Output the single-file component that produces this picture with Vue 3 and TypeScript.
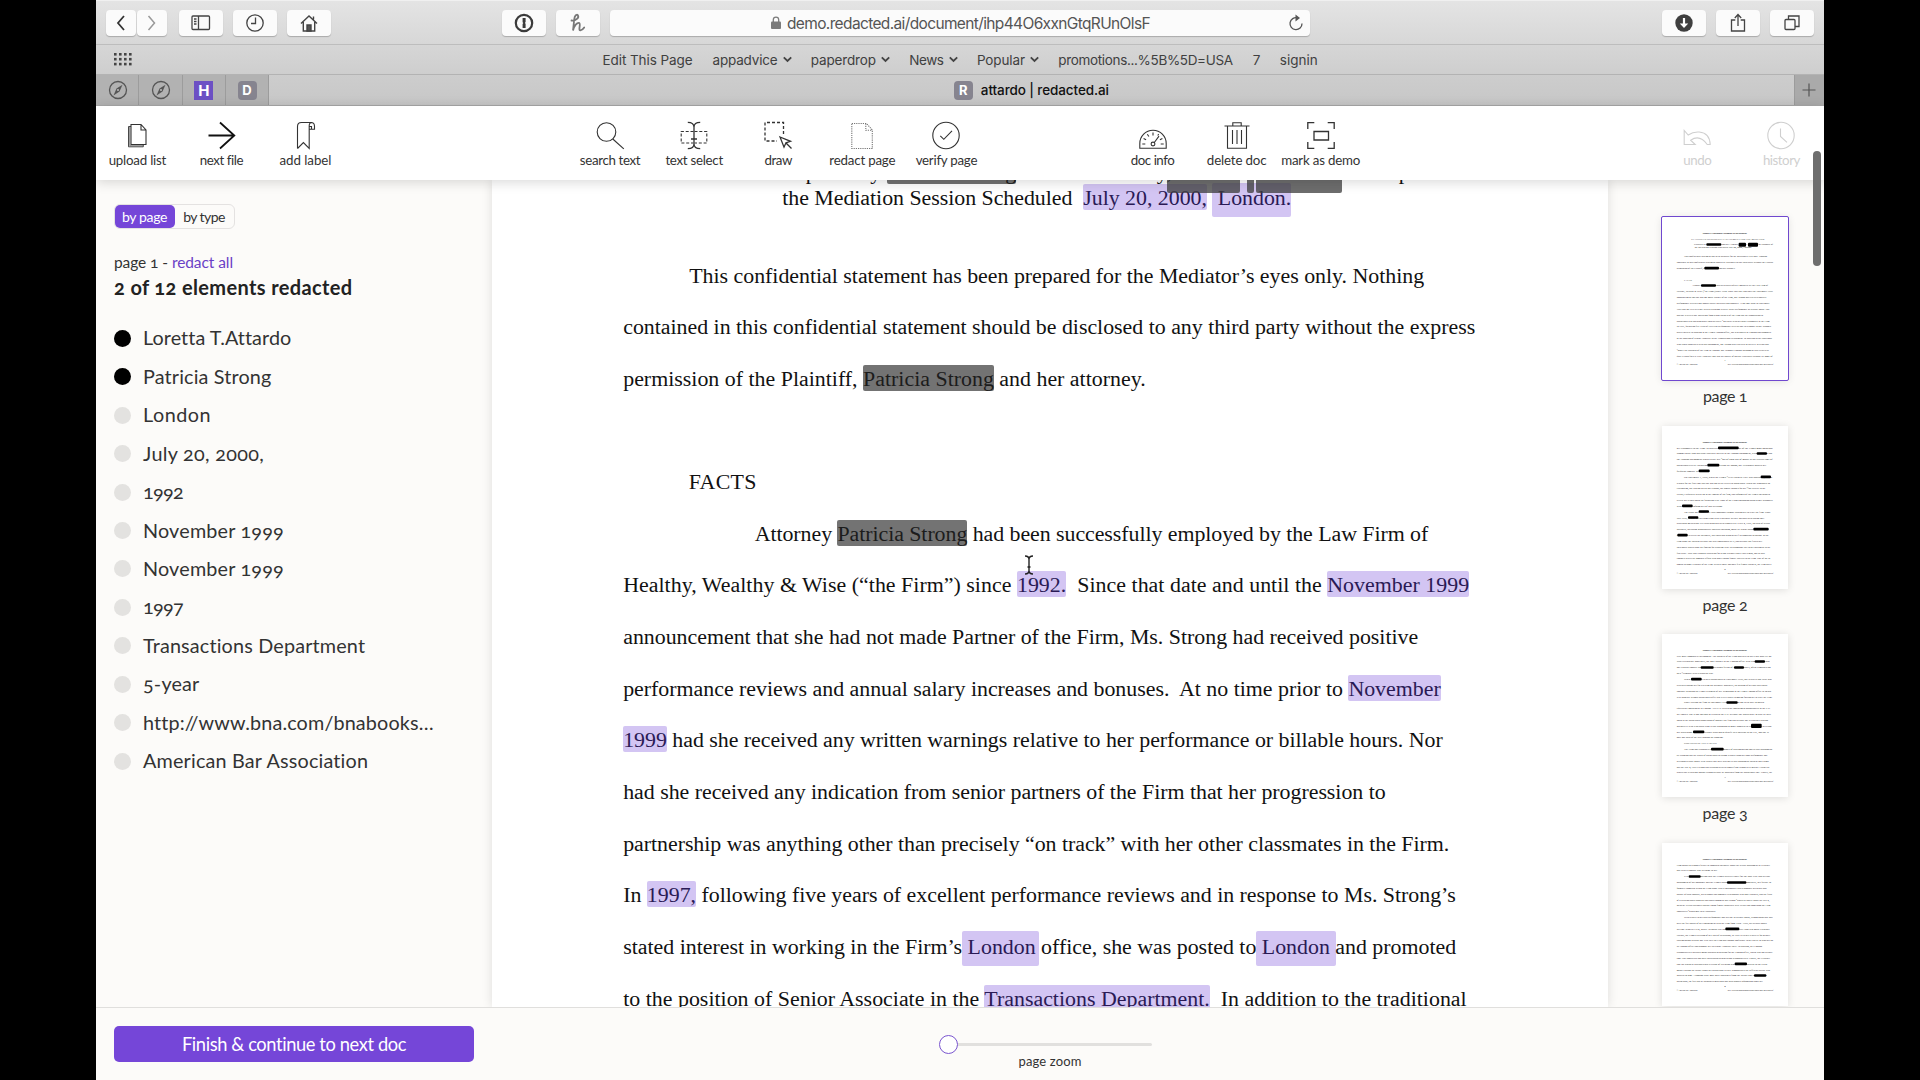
<script setup lang="ts">
import type { Directive } from 'vue'

/* Spreads letter spacing so that a text run takes the given width. */
const vFit: Directive<HTMLElement, number> = {
  mounted(el, binding) {
    const natural = el.getBoundingClientRect().width
    const count = (el.textContent ?? '').length
    if (natural > 0 && count > 0) {
      el.style.letterSpacing = `${(binding.value - natural) / count}px`
    }
  },
}

interface Bookmark { label: string; width: number; menu?: boolean }
const bookmarks: Bookmark[] = [
  { label: 'Edit This Page', width: 90 },
  { label: 'appadvice', width: 65, menu: true },
  { label: 'paperdrop', width: 65, menu: true },
  { label: 'News', width: 34.5, menu: true },
  { label: 'Popular', width: 48, menu: true },
  { label: 'promotions...%5B%5D=USA', width: 174.5 },
  { label: '7', width: 7 },
  { label: 'signin', width: 38 },
]

interface Tool { label: string; width: number; icon: string; off?: boolean }
const groups: { cls: string; tools: Tool[] }[] = [
  {
    cls: 'g1',
    tools: [
      { label: 'upload list', width: 57.5, icon: '<path d="M9 3.500h10l5 5.500v14.500H9zM19 3.500v5.500h5"/><path stroke-width=".9" d="M9 5.500H6.500v20.300h14.800v-2.300"/><path stroke-width=".6" d="M7.700 6v18.700h13.300"/>' },
      { label: 'next file', width: 43, icon: '<path stroke-width="1.800" stroke="#111" d="M2.500 14.500h25.500M14 1.500l14.300 13L14 27.500"/>' },
      { label: 'add label', width: 52, icon: '<path d="M7.500 27.500V5.500q0-4 4-4H21q3.500 0 3.500 3.800v2.900h-5.300M19.200 8.200V27.500l-5.800-6-5.900 6M19.200 8.200V4.800q0-3.300 2.600-3.300M19.200 5.500h2.300v2.500"/>' },
    ],
  },
  {
    cls: 'g2',
    tools: [
      { label: 'search text', width: 60.5, icon: '<circle cx="11.500" cy="11" r="9.300"/><path d="M17.800 18l11 9.800"/>' },
      { label: 'text select', width: 57.5, icon: '<path stroke-dasharray="3 1.800" d="M14.500 10.500H2.200v11.500h12.300M15.500 10.500h12.300v11.500H15.500"/><path stroke-width="1.300" d="M8.800 1.300q6.200 0 6.200 5v16.400q0 5-6.200 5M21.200 1.300q-6.200 0-6.200 5v16.400q0 5 6.200 5M12 18h6"/>' },
      { label: 'draw', width: 27.5, icon: '<path stroke-width="1.300" stroke-dasharray="3 2" d="M20.500 13V1.500H2v18.500h12"/><path stroke-width="1.300" d="M17 16l10.500 4.300-4.500 1.500-2 4.400zM22.500 21.500l6 6"/>' },
      { label: 'redact page', width: 66, icon: '<path stroke="#777" stroke-dasharray="1.200 1" d="M4.800 2.500h14.700l5.800 6.500v18.500H4.800zM18.800 2.500v6.800h6.500"/>' },
      { label: 'verify page', width: 61.5, icon: '<circle cx="15" cy="14.500" r="13.200"/><path d="M9.300 14.800l3.500 3.500 8.200-8.500"/>' },
    ],
  },
  {
    cls: 'g3',
    tools: [
      { label: 'doc info', width: 43.5, icon: '<path d="M1.800 27.300v-4.800a13.200 13.200 0 0 1 26.400 0v4.800z"/><circle cx="15" cy="23" r="1.900"/><path d="M16.300 21.500l4.700-6.300M4.300 23h3M22.700 23h3M5.600 17.500l2.500 1.300M9.300 13.200l1.600 2.300M15 11.500v3M24.400 17.500l-2.500 1.300M20.700 13.200l-1 1.300"/>' },
      { label: 'delete doc', width: 59.5, icon: '<path d="M2.500 5h25M10.800 5V1.700h8.400V5M5.500 5v22.300h19V5M10.500 9v14M15 9v14M19.500 9v14"/>' },
      { label: 'mark as demo', width: 79, icon: '<path stroke-width="1.300" d="M1.800 8V1.700h6.500M21.700 1.700h6.500V8M28.200 21v6.300h-6.500M8.300 27.300H1.800V21M8 10.500h14.500v8.500H8z"/>' },
    ],
  },
  {
    cls: 'g4',
    tools: [
      { label: 'undo', width: 28, off: true, icon: '<path d="M2.200 9.500v14h11l-4.500-4.300q9-6.300 16.500 4.300h3q-.5-11.500-11-12.500-6-.5-11 3z"/>' },
      { label: 'history', width: 37, off: true, icon: '<circle cx="15" cy="14.500" r="13.200"/><path d="M14.500 7.500v8l6.500 5.800"/>' },
    ],
  },
]

interface Entity { name: string; width: number; redacted?: boolean }
const entities: Entity[] = [
  { name: 'Loretta T.Attardo', width: 147, redacted: true },
  { name: 'Patricia Strong', width: 128.5, redacted: true },
  { name: 'London', width: 68 },
  { name: 'July 20, 2000,', width: 121 },
  { name: '1992', width: 40 },
  { name: 'November 1999', width: 141 },
  { name: 'November 1999', width: 141 },
  { name: '1997', width: 40 },
  { name: 'Transactions Department', width: 222.5 },
  { name: '5-year', width: 56.5 },
  { name: 'http://www.bna.com/bnabooks…', width: 290 },
  { name: 'American Bar Association', width: 225.5 },
]

type Mark = 'hl' | 'tall' | 'tall wide' | 'dark'
interface Run { t: string; m?: Mark }
interface Line { runs: Run[]; indent: number; width: number; cls?: string }
const r = (t: string, m?: Mark): Run => ({ t, m })
const lines: Line[] = [
  { cls: 'single', indent: 153.5, width: 694, runs: [r('Prepared by '), r('Patricia Strong', 'dark'), r(' and her Attorney, Loretta T. Attardo for Purposes of')] },
  { cls: 'single last', indent: 159, width: 509, runs: [r('the Mediation Session Scheduled\u00a0 '), r('July 20, 2000,', 'hl'), r('\u00a0 '), r('London.', 'tall')] },
  { indent: 66, width: 735, runs: [r('This confidential statement has been prepared for the Mediator’s eyes only. Nothing')] },
  { indent: 0, width: 852, runs: [r('contained in this confidential statement should be disclosed to any third party without the express')] },
  { indent: 0, width: 522.5, runs: [r('permission of the Plaintiff, '), r('Patricia Strong', 'dark'), r(' and her attorney.')] },
  { indent: 0, width: 0, runs: [] },
  { indent: 65.5, width: 68, runs: [r('FACTS')] },
  { indent: 131.5, width: 673.5, runs: [r('Attorney '), r('Patricia Strong', 'dark'), r(' had been successfully employed by the Law Firm of')] },
  { indent: 0, width: 846, runs: [r('Healthy, Wealthy & Wise (“the Firm”) since '), r('1992.', 'hl'), r('\u00a0 Since that date and until the '), r('November 1999', 'hl')] },
  { indent: 0, width: 795, runs: [r('announcement that she had not made Partner of the Firm, Ms. Strong had received positive')] },
  { indent: 0, width: 817.5, runs: [r('performance reviews and annual salary increases and bonuses.\u00a0 At no time prior to '), r('November', 'hl')] },
  { indent: 0, width: 819.5, runs: [r('1999', 'hl'), r(' had she received any written warnings relative to her performance or billable hours. Nor')] },
  { indent: 0, width: 762.5, runs: [r('had she received any indication from senior partners of the Firm that her progression to')] },
  { indent: 0, width: 826, runs: [r('partnership was anything other than precisely “on track” with her other classmates in the Firm.')] },
  { indent: 0, width: 832.5, runs: [r('In '), r('1997,', 'hl'), r(' following five years of excellent performance reviews and in response to Ms. Strong’s')] },
  { indent: 0, width: 833, runs: [r('stated interest in working in the Firm’s '), r('London', 'tall'), r(' office, she was posted to '), r('London', 'tall wide'), r(' and promoted')] },
  { indent: 0, width: 843.5, runs: [r('to the position of Senior Associate in the '), r('Transactions Department.', 'hl'), r('\u00a0 In addition to the traditional')] },
]

/* Thumbnails are drawn on a 378 × 488 grid: rows [x, width, text, y], bars [x, y, width, height]. */
interface Thumb { top: number; rows: [number, number, string, number][]; bars: [number, number, number, number?][] }
const thumbs: Thumb[] = [
  {
    top: 47,
    rows: [
      [88, 219, 'PLAINTIFF’S CONFIDENTIAL STATEMENT FOR THE MEDIATOR', 65],
      [96, 237, 'Prepared by Patricia Strong and her Attorney, Loretta T. Attardo for Purposes of', 82],
      [98, 172, 'the Mediation Session Scheduled July 20, 2000, London.', 91],
      [66, 249, 'This confidential statement has been prepared for the Mediator’s eyes only. Nothing', 118],
      [44, 289, 'contained in this confidential statement should be disclosed to any third party without the express', 135],
      [44, 176, 'permission of the Plaintiff, Patricia Strong and her attorney.', 153],
      [66, 24, 'FACTS', 188],
      [90, 228, 'Attorney Patricia Strong had been successfully employed by the Law Firm of', 205],
      [44, 288, 'Healthy, Wealthy & Wise (“the Firm”) since 1992. Since that date and until the November 1999', 223],
      [44, 270, 'announcement that she had not made Partner of the Firm, Ms. Strong had received positive', 240],
      [44, 278, 'performance reviews and annual salary increases and bonuses. At no time prior to November', 258],
      [44, 278, '1999 had she received any written warnings relative to her performance or billable hours. Nor', 275],
      [44, 259, 'had she received any indication from senior partners of the Firm that her progression to', 293],
      [44, 280, 'partnership was anything other than precisely “on track” with her other classmates in the Firm.', 311],
      [44, 283, 'In 1997, following five years of excellent performance reviews and in response to Ms. Strong’s', 328],
      [44, 283, 'stated interest in working in the Firm’s London office, she was posted to London and promoted', 346],
      [44, 286, 'to the position of Senior Associate in the Transactions Department. In addition to the traditional', 363],
      [44, 276, 'legal work associated with this assignment, Ms. Strong was expected to actively develop and', 381],
      [44, 276, '“grow” the business of the Firm in London. Ms. Strong’s London assignment was viewed as', 398],
      [44, 288, 'quite a coup for a 5-year Associate and was the source of openly expressed jealousy by some of', 416],
    ],
    bars: [[133, 82, 45], [230, 83, 22, 12], [258, 83, 30, 12], [127, 153, 44], [117, 205, 45]],
  },
  {
    top: 48,
    rows: [
      [44, 288, 'her classmates in the Firm. In particular, Patricia Strong one of the Firm’s most notorious', 65],
      [44, 287, 'Summit nurse who had also expressed interest in the London assignment, resented Strong that', 82],
      [44, 288, 'the London assignment would place her “out of sight out of mind” at the critical time of', 100],
      [44, 268, 'partnership review. Following Strong’s rejection to London, Mr. Heathcock assured her', 117],
      [44, 98, 'frequent contact with Strong', 135],
      [66, 264, 'On November 1, 1999, when the Firm’s “New Partners List” was published, Strong', 152],
      [44, 280, 'learned for the first time that she had not been elected to partnership. When she demanded an', 170],
      [44, 266, 'explanation, she was not given any reasons, but simply thanked for her “fine service to the', 187],
      [44, 280, 'clients,” requested to stay on in the employ of the firm, and informed of the Firm’s intention to', 205],
      [44, 289, 'review her record again the following year. None of the Firm’s managing partners met personally', 222],
      [44, 138, 'with Strong to inform her of this decision.', 240],
      [66, 260, 'The result on Strong’s life was emotional turmoil causing her to leave the firm. Since', 257],
      [44, 264, 'July 1999, Strong had been meeting with a therapist weekly and had been taking anti-', 275],
      [44, 280, 'depressant medication. Her depression had been triggered by a July 4, 1999, incident of sexual', 292],
      [44, 276, 'advances, including inappropriate physical touching, made by senior partner, Wise Strong', 310],
      [44, 276, 'Strong had rejected the advances, but could not bring herself to complain to anyone in the', 327],
      [44, 256, 'Firm about the incident because she was embarrassed by it, and because she feared her', 345],
      [44, 281, 'colleagues would think her foolish for allowing Wise to accompany her to her apartment in the', 362],
      [44, 264, 'first place. Wise had a known reputation for being a drinker and a lady’s man, and he had', 380],
      [44, 281, 'engaged in several romantic affairs with other young female lawyers in the Firm. One of the as', 397],
      [44, 284, 'known as name a partner of the Firm. With all male and only few female partners, the Firm has a', 415],
    ],
    bars: [[168, 65, 62], [284, 82, 31], [136, 117, 36], [110, 134, 33], [296, 152, 31], [60, 239, 32], [110, 256, 31], [78, 274, 31], [274, 309, 46], [46, 327, 31]],
  },
  {
    top: 48,
    rows: [
      [44, 284, 'very male-dominated environment. The partners of the Firm appeared to put a low hard eye on', 65],
      [44, 279, 'Wise’s behavior. Moreover, the only partner in the London office with whom Strong had', 82],
      [44, 282, 'any regular contact was Patricia, Firebrand friend of Strong Bradley, often remarked on', 100],
      [44, 110, 'their “criminal” Wise’s behavior was.', 117],
      [66, 263, 'When Strong was denied partnership in November 1999, she realized that Wise had', 135],
      [44, 272, 'retaliated against her for rejecting his advances. Moreover, the opinion of her had said would', 152],
      [44, 283, 'continue to poison the Firm’s treatment of her. Remaining in the Firm’s London office as an 8th', 170],
      [44, 287, 'year associate without partnership suffer was a very public demotion forcing her to leave the Firm.', 188],
      [66, 240, 'Since leaving the firm in November 1999, Strong has not been able to obtain', 205],
      [44, 282, 'equivalent employment in London. As a U.S. citizen the employment opportunities in the U.K.', 223],
      [44, 283, 'are limited. She is not anxious to return to the U.S. because she would have to start all over', 240],
      [44, 274, 'again in the partnership progression of another law firm and because she is currently starting', 258],
      [44, 284, 'intensively with a therapist who is just beginning to make progress in terms Strong to return', 275],
      [44, 276, 'her depression. Strong is certainly studying to qualify as a solicitor in the UK, and she is', 293],
      [44, 140, 'only one third of the way through the program.', 310],
      [66, 98, 'POSITIONS OF THE PARTIES', 328],
      [66, 265, 'The Firm has responded to Strong’s charges of discrimination and sexual harassment', 345],
      [44, 272, 'by claiming that the denial of partnership to Strong is based upon her poor performance and', 363],
      [44, 276, 'declining billable hours. Wise denies that there was any sexual harassment incident and claims', 380],
      [44, 279, 'that the July 4, 1999 evening and reaching between himself and Strong were mutual. Further he', 398],
      [44, 286, 'denies any retaliation against Strong because he abstained from the partnership vote. Finally, the', 415],
    ],
    bars: [[278, 82, 31], [116, 100, 39], [216, 100, 30], [87, 135, 32], [193, 205, 34], [267, 275, 32, 13], [93, 293, 34], [147, 345, 38]],
  },
  {
    top: 48,
    rows: [
      [44, 280, 'Firm points to Strong’s failure to complain internally about the sexual harassment as evidence', 65],
      [44, 122, 'that Wise’s conduct was welcome to her.', 82],
      [66, 258, 'It is Strong’s position that the Firm’s articles liable for the past year was sexual', 100],
      [44, 283, 'harassment of her manager and the Firm’s partner Patricia Strong Moreover, her failure to', 117],
      [44, 270, 'formally complain within the Firm about Wise’s misconduct was reasonable given his past', 135],
      [44, 286, 'history of such conduct, his personal and romantic relationship with other partners, and the fears', 152],
      [44, 278, 'of retaliation based upon his unleashed comment that Strong “would be sorry” about the July 4,', 170],
      [44, 281, 'incident. Sexual advances toward young female associates were clearly not something the Firm', 187],
      [44, 118, 'considered “problems” to be addressed.', 205],
      [66, 266, 'With respect to her past performance and decline in billable hours, Strong points out that', 222],
      [44, 270, 'over the full course of her employment with the Firm from 1992 - 1999, her billable hours', 240],
      [44, 280, 'average 2100 per year, nearly 10 hours less than Strong’s hourly who was made a partner.', 257],
      [44, 280, 'Further, the Firm’s criticism of her lack of dedication, in 1999 is clearly a pretext for gender', 275],
      [44, 289, 'discrimination because one year later the Firm had enough confidence in her ability to send her on', 292],
      [44, 256, 'its London office and promote her to Senior Associate there. In addition, her London', 310],
      [44, 288, 'responsibilities included major business generation for the London office, which was not billable', 327],
      [44, 280, 'time. She should did not have such business generation responsibilities. Finally, the evidence', 345],
      [44, 272, 'that the partners discussed out relevant of retention when Strong’s success in the client', 362],
      [44, 280, 'market during the debate about her partnership clearly demonstrates the different culture was', 380],
      [44, 270, 'applied to him. Although Wise may have abstained from the actual vote about Strong', 397],
      [44, 258, 'partnership, the fact that he introduced malicious and third-handed information about her', 415],
    ],
    bars: [[80, 100, 36], [195, 118, 58], [190, 257, 42], [218, 362, 37], [276, 397, 37]],
  },
]
</script>

<template>
  <div class="stage">
    <div class="window">
      <div class="toolbar">
        <div class="btn nav"><svg width="12" height="18" viewBox="0 0 12 18"><path d="M9 2L3 9l6 7" stroke="#333" stroke-width="1.800" /></svg></div>
        <div class="btn nav fwd"><svg width="12" height="18" viewBox="0 0 12 18"><path d="M2.500 2L8.500 9l-6 7" stroke="#999" stroke-width="1.500" /></svg></div>
        <div class="btn side"><svg width="20" height="16" viewBox="0 0 20 16" stroke="#444" stroke-width="1.300"><rect x="1" y="1" width="17.500" height="13.500" rx="1" /><path d="M7.500 1v13.500M3 4h2.500M3 6.500h2.500M3 9h2.500" /></svg></div>
        <div class="btn"><svg width="20" height="20" viewBox="0 0 20 20" stroke="#444" stroke-width="1.300"><circle cx="10" cy="10" r="8.200" /><path d="M10.500 4.500v6H6" /></svg></div>
        <div class="btn"><svg width="20" height="20" viewBox="0 0 20 20" stroke="#444" stroke-width="1.400"><path d="M2 10.500L10 3l8 7.500M4.300 9v9h11.400V9M14.500 6.500V3.500" /><path d="M8 18v-6h4v6z" fill="#555" /></svg></div>
        <div class="btn pass"><svg width="20" height="20" viewBox="0 0 20 20"><circle cx="10" cy="10" r="8.200" stroke="#3b3b3b" stroke-width="2.200" /><path d="M8.600 5h3v4l-.7.900.7.900v4.200H8.600v-4l.7-.9-.7-.9z" fill="#3b3b3b" /></svg></div>
        <div class="btn"><svg width="18" height="20" viewBox="0 0 18 20" stroke="#777" stroke-width="1.800" stroke-linecap="round"><path d="M2.500 7.500C7 8 10.500 4.500 8.800 2.200 7.500.800 5.600 3 5.300 6L4 17.500C5.200 12.500 8 9.500 10 9.800c2.300.4-1 7.200 1.200 7.500 1.600.2 3-1.300 4-2.800" /></svg></div>
        <div class="address">
          <svg class="lock" width="10" height="13" viewBox="0 0 10 13"><path d="M2.300 6V3.800a2.700 2.700 0 0 1 5.400 0V6" stroke="#7b7b7b" stroke-width="1.300" /><rect y="5.500" width="10" height="7.500" rx="1" fill="#7b7b7b" /></svg>
          <span v-fit="363" class="url">demo.redacted.ai/document/ihp44O6xxnGtqRUnOlsF</span>
          <svg class="reload" width="16" height="18" viewBox="0 0 16 18"><path d="M9.500 3.800A6 6 0 1 0 14 9.500" stroke="#555" stroke-width="1.300" /><path d="M7.500.5l4.500 3.500-4.500 3.500z" fill="#555" /></svg>
        </div>
        <div class="btn dl"><svg width="18" height="20" viewBox="0 0 18 20"><circle cx="9" cy="10" r="8.700" fill="#3f3f3f" /><path d="M9 5v7" stroke="#fff" stroke-width="2.200" /><path d="M4.800 10.500h8.400L9 15z" fill="#fff" /></svg></div>
        <div class="btn"><svg width="18" height="20" viewBox="0 0 18 20" stroke="#444" stroke-width="1.300"><path d="M6.300 7H2.500v11h13V7h-3.800M9 13V2M5.800 5L9 1.500 12.200 5" /></svg></div>
        <div class="btn"><svg width="18" height="20" viewBox="0 0 18 20" stroke="#444" stroke-width="1.300"><rect x="2" y="6.500" width="10" height="10" rx="1" /><path d="M5.500 6.500V3h10.500v10.500h-4" /></svg></div>
      </div>

      <div class="bookmarks">
        <svg class="grid" width="18" height="13" viewBox="0 0 18 13"><template v-for="y in 3" :key="y"><rect v-for="x in 4" :key="x" :x="(x - 1) * 5" :y="(y - 1) * 4.900" width="2.600" height="2.600" /></template></svg>
        <div class="marks">
          <span v-for="b in bookmarks" :key="b.label" class="mark" :class="{ menu: b.menu }">
            <span v-fit="b.width">{{ b.label }}</span>
            <svg v-if="b.menu" width="9" height="7" viewBox="0 0 9 7"><path d="M.8 1.300l3.700 3.700 3.700-3.700" stroke="#444" stroke-width="1.800" /></svg>
          </span>
        </div>
      </div>

      <div class="tabs">
        <div v-for="n in 2" :key="n" class="tab"><svg class="compass" width="20" height="20" viewBox="0 0 20 20"><circle cx="10" cy="10" r="8.500" stroke="#555" stroke-width="1.300" /><path d="M14.500 4.800l-3 6.700-6 4 3-7z" fill="#555" /><circle cx="10" cy="10" r="1" fill="#bbb" /></svg></div>
        <div class="tab"><i class="fav purple">H</i></div>
        <div class="tab"><i class="fav">D</i></div>
        <div class="tab active"><i class="fav">R</i><span v-fit="128">attardo | redacted.ai</span></div>
        <div class="tab plus"><svg width="14" height="14" viewBox="0 0 14 14"><path d="M7 .5v13M.5 7h13" stroke="#555" stroke-width="1.200" /></svg></div>
      </div>

      <header class="tools">
        <div v-for="g in groups" :key="g.cls" class="group" :class="g.cls">
          <div v-for="t in g.tools" :key="t.label" class="tool" :class="{ off: t.off }">
            <svg width="30" height="30" viewBox="0 0 30 30" stroke="currentColor" stroke-width="1.100" v-html="t.icon" />
            <span v-fit="t.width">{{ t.label }}</span>
          </div>
        </div>
      </header>

      <main class="work">
        <aside class="sidebar">
          <div class="toggle"><span class="on"><b v-fit="45">by page</b></span><span><b v-fit="41.5">by type</b></span></div>
          <p class="where"><span v-fit="119">page 1 - <a>redact all</a></span></p>
          <h2><span v-fit="238.500">2 of 12 elements redacted</span></h2>
          <ul>
            <li v-for="(e, i) in entities" :key="i"><i :class="{ done: e.redacted }" /><span v-fit="e.width">{{ e.name }}</span></li>
          </ul>
        </aside>

        <section class="page">
          <div v-for="(l, i) in lines" :key="i" class="line" :class="l.cls" :style="{ paddingLeft: l.indent + 'px' }">
            <span v-fit="l.width" class="text"><span v-for="(s, j) in l.runs" :key="j" :class="s.m">{{ s.t }}</span></span>
          </div>
          <i class="veil v1" /><i class="veil v2" /><i class="veil v3" />
          <svg class="caret" width="10" height="20" viewBox="0 0 10 20" stroke="#222" stroke-width="1.400"><path d="M1 1q4 0 4 3.500v11Q5 19 1 19M9 1Q5 1 5 4.500v11Q5 19 9 19M3.500 12h3" /></svg>
        </section>

        <nav class="thumbs">
          <figure v-for="(t, i) in thumbs" :key="i" :class="{ current: i === 0 }">
            <svg width="126" height="163" viewBox="0 0 378 488" class="sheet">
              <text x="122" :y="t.top + 3" textLength="133" lengthAdjust="spacingAndGlyphs" class="bold">Plaintiff’s Confidential Statement for the Mediator</text>
              <text v-for="row in t.rows" :key="row[3]" :x="row[0]" :y="row[3] + 3" :textLength="row[1]" lengthAdjust="spacingAndGlyphs">{{ row[2] }}</text>
              <rect v-for="(b, k) in t.bars" :key="k" :x="b[0]" :y="b[1] - (b[3] ?? 8) / 2" :width="b[2]" :height="b[3] ?? 8" rx="3" fill="#000" />
              <text x="187" y="431">{{ i + 1 }}</text>
              <text x="44" y="444" textLength="62" lengthAdjust="spacingAndGlyphs" class="foot">© American Bar Association</text>
              <text x="197" y="444" textLength="137" lengthAdjust="spacingAndGlyphs" class="foot">http://www.bna.com/bnabooks/ababna/annual/2001/mediation.pdf</text>
            </svg>
            <figcaption><span v-fit="i ? 45 : 44">page {{ i + 1 }}</span></figcaption>
          </figure>
        </nav>
      </main>

      <footer class="bottom">
        <button><span v-fit="224.500">Finish &amp; continue to next doc</span></button>
        <div class="zoom">
          <div class="track"><i /></div>
          <span v-fit="63">page zoom</span>
        </div>
      </footer>
      <i class="scrollbar" />
    </div>
  </div>
</template>

<style>
html, body { margin: 0; background: #000; overflow: hidden; }
</style>

<style scoped>
* { box-sizing: border-box; }
svg { fill: none; display: block; flex: none; }
svg.grid { fill: #444; }
i { font-style: normal; }
.stage { width: 1920px; height: 1080px; background: #000; overflow: hidden; }
.window { position: relative; width: 1728px; height: 1080px; margin-left: 96px; display: flex; flex-direction: column; background: #fcfbf9; font-family: Lato, "Liberation Sans", sans-serif; color: #333; overflow: hidden; }
.window > * { flex: none; }
span { white-space: pre; }

.toolbar { height: 45px; padding: 9px 10px 0; display: flex; background: linear-gradient(#e4e4e4, #d7d7d7); border-top: 1px solid #f0f0f0; border-bottom: 1px solid #bdbdbd; }
.btn { width: 44px; height: 26px; margin-right: 10px; border-radius: 4px; background: #fbfbfb; box-shadow: 0 1px 1px rgba(0,0,0,.22); display: flex; align-items: center; justify-content: center; flex: none; }
.btn.nav { width: 29.500px; margin-right: 1.500px; }
.btn.fwd { margin-right: 12px; }
.btn.pass { margin-left: 161.500px; }
.btn:last-child { margin-right: 0; }
.address { position: relative; width: 700px; height: 26px; border-radius: 4px; background: #fbfbfb; box-shadow: 0 1px 1px rgba(0,0,0,.22); display: flex; align-items: center; padding-left: 161px; flex: none; }
.btn.dl { margin-left: auto; }
.lock { margin: -2px 6px 0 0; }
.url { font: 15.500px Inter, sans-serif; color: #555; }
.reload { margin-left: auto; margin-right: 6px; }

.bookmarks { height: 30px; display: flex; align-items: center; background: linear-gradient(#d6d6d6, #cecece); border-bottom: 1px solid #b3b3b3; font: 13.500px Inter, sans-serif; color: #404040; }
.grid { margin-left: 18px; }
.marks { display: flex; margin-left: 470.500px; gap: 20px; }
.mark { display: flex; align-items: center; gap: 5px; }
.mark.menu { margin-right: -.7px; }

.tabs { height: 31px; display: flex; background: #b2b2b2; border-bottom: 1px solid #a9a9a9; }
.tab { width: 43.300px; display: flex; align-items: center; justify-content: center; border-right: 1px solid #9c9c9c; }
.tab.active { flex: 1; background: linear-gradient(#cdcdcd, #c7c7c7); gap: 8px; font: 500 13.500px Inter, sans-serif; color: #111; }
.tab.plus { width: 29.500px; border: 0; background: #aaa; }
.compass { margin-left: 1.500px; }
.fav { width: 19px; height: 19px; border-radius: 4px; background: #86848f; color: #fff; font: bold 13px/19px Inter, sans-serif; text-align: center; }
.fav.purple { border-radius: 0; background: #6c50c4; font-size: 15px; }

.tools { position: relative; z-index: 2; height: 74px; display: flex; background: #fff; box-shadow: 0 2px 12px rgba(0,0,0,.16); }
.group { display: flex; }
.g1 { margin-left: -.6px; }
.g2 { margin-left: 220.600px; }
.g3 { margin-left: 122px; }
.g4 { margin-left: 292.500px; }
.tool { width: 84.100px; padding-top: 15px; display: flex; flex-direction: column; align-items: center; font-size: 13.300px; line-height: 18px; color: #333; }
.g1 .tool { width: 84px; }
.tool.off { color: #cfcfcf; }

.work { height: 827px; display: flex; overflow: hidden; }
.sidebar { width: 396px; padding: 24px 0 0 18px; font-variant-numeric: oldstyle-nums; }
.toggle { width: 121px; height: 25px; border: 1px solid #e4e2e1; border-radius: 6px; display: flex; font-size: 14px; line-height: 23px; }
.toggle > span { flex: 1; text-align: center; }
.toggle > .on { flex: none; width: 60px; background: #7546d8; color: #fff; border-radius: 5px; }
.toggle b { display: inline-block; font-weight: 400; margin-left: -1px; }
.where { margin: 22px 0 0; font-size: 15.500px; line-height: 22px; height: 22px; }
.where a { color: #6a3fc6; }
h2 { margin: 1px 0 0; font-size: 20px; line-height: 26px; height: 26px; color: #222; }
h2 span, .where > span { display: inline-block; }
ul { list-style: none; margin: 19.200px 0 0; padding: 0; }
li { height: 38.430px; display: flex; align-items: center; font-size: 19.800px; }
li span { margin-top: -2px; }
li i { width: 17px; height: 17px; border-radius: 50%; background: #e3e2e0; margin-right: 12px; }
li i.done { background: #000; }

.page { position: relative; width: 1116px; padding: 0 0 0 131.200px; background: #fff; box-shadow: 0 0 10px rgba(0,0,0,.12); font: 21.900px "Liberation Serif", serif; color: #111; overflow: hidden; }
.line { height: 51.670px; line-height: 51.670px; }
.single { height: 25.830px; line-height: 25.830px; }
.single:first-child { margin-top: -21px; }
.single.last { margin-bottom: 38.900px; }
.text { display: inline-block; }
.hl { background: #d3c5f3; color: #2a1a55; border-radius: 2px; padding-top: 1px; }
.tall { background: #d3c5f3; color: #2a1a55; border-radius: 2px; padding: 3px 3px 7px 6px; margin: 0 -3px 0 -6px; }
.tall.wide { padding-right: 6px; margin-right: -6px; }
.single .tall { padding-right: 0; margin-right: 0; padding-top: 2px; }
.dark { background: #737373; border-radius: 2px; color: #1c1c1c; padding-top: 1px; }
.veil { position: absolute; top: 0; height: 12.500px; background: rgba(60,60,60,.75); border-radius: 0 0 2px 2px; }
.v1 { left: 675px; width: 73px; }
.v2 { left: 754.500px; width: 7.500px; }
.v3 { left: 764px; width: 85.500px; }
.caret { position: absolute; left: 532px; top: 375px; }

.thumbs { width: 216px; padding-top: 36px; }
figure { margin: 0 0 45.500px 54px; width: 126px; height: 163px; position: relative; }
figure:first-child { margin-top: 1px; }
.sheet { background: #fff; box-shadow: 0 1px 8px rgba(0,0,0,.12); }
.current .sheet { outline: 1.500px solid #7048cf; border-radius: 1px; }
.sheet text { font: 8.400px "Liberation Serif", serif; fill: #111; }
.sheet .bold { font-weight: bold; font-size: 7.500px; }
.sheet .foot { font-size: 6.500px; }
figcaption { height: 45px; padding-top: 4px; text-align: center; font-size: 16px; line-height: 24px; font-variant-numeric: oldstyle-nums; }
figcaption span { display: inline-block; }

.bottom { position: relative; z-index: 3; height: 73px; border-top: 1px solid #e0dfdd; background: #fcfbf9; display: flex; padding-left: 18px; }
button { width: 360px; height: 36px; margin-top: 18px; border: 0; border-radius: 5px; background: #7546d8; color: #fff; font: 18.300px Lato, sans-serif; padding: 0; }
.zoom { width: 212px; margin-left: 466px; padding-top: 35px; display: flex; flex-direction: column; align-items: center; font-size: 13px; line-height: 16px; }
.zoom > span { margin-left: 8px; }
.track { position: relative; width: 212px; height: 3px; background: #e1e0de; border-radius: 2px; margin-bottom: 7px; }
.track i { position: absolute; left: -1px; top: -8px; width: 19px; height: 19px; border: 1.500px solid #7a55cf; border-radius: 50%; background: #fff; }
.scrollbar { position: absolute; z-index: 4; right: 3px; top: 151px; width: 8px; height: 115px; border-radius: 4px; background: #6e6e6e; }
</style>
